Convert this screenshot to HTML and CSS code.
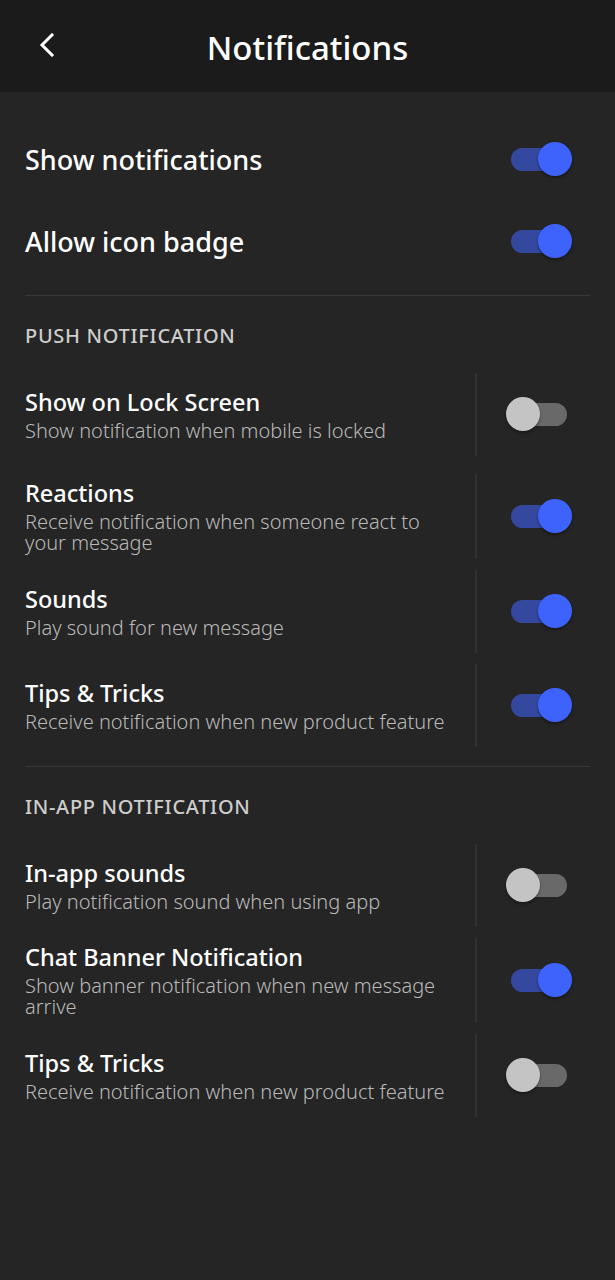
FILE: index.html
```html
<!DOCTYPE html>
<html lang="en">
<head>
<meta charset="utf-8">
<title>Notifications</title>
<link rel="stylesheet" href="styles.css">
</head>
<body>
<div class="screen">
  <header class="topbar">
    <button class="back" aria-label="Back">
      <svg width="24" height="24" viewBox="0 0 24 24"><polyline points="18,4 8,14 18,24" transform="translate(0,-2)" fill="none" stroke="#fff" stroke-width="3" stroke-linecap="square"/></svg>
    </button>
    <h1 class="title">Notifications</h1>
  </header>

  <main class="content">
    <div class="main-row">
      <span class="main-label">Show notifications</span>
      <span class="toggle on"><span class="knob"></span></span>
    </div>
    <div class="main-row">
      <span class="main-label">Allow icon badge</span>
      <span class="toggle on"><span class="knob"></span></span>
    </div>

    <hr class="rule">

    <h2 class="section">PUSH NOTIFICATION</h2>
    <div class="list">
      <div class="item">
        <div class="text"><div class="item-title">Show on Lock Screen</div><div class="item-sub">Show notification when mobile is locked</div></div>
        <div class="ctl"><span class="toggle"><span class="knob"></span></span></div>
      </div>
      <div class="item spaced">
        <div class="text"><div class="item-title">Reactions</div><div class="item-sub">Receive notification when someone react to your message</div></div>
        <div class="ctl"><span class="toggle on"><span class="knob"></span></span></div>
      </div>
      <div class="item">
        <div class="text"><div class="item-title">Sounds</div><div class="item-sub">Play sound for new message</div></div>
        <div class="ctl"><span class="toggle on"><span class="knob"></span></span></div>
      </div>
      <div class="item">
        <div class="text"><div class="item-title">Tips &amp; Tricks</div><div class="item-sub">Receive notification when new product feature</div></div>
        <div class="ctl"><span class="toggle on"><span class="knob"></span></span></div>
      </div>
    </div>

    <hr class="rule rule2">

    <h2 class="section">IN-APP NOTIFICATION</h2>
    <div class="list">
      <div class="item">
        <div class="text"><div class="item-title">In-app sounds</div><div class="item-sub">Play notification sound when using app</div></div>
        <div class="ctl"><span class="toggle"><span class="knob"></span></span></div>
      </div>
      <div class="item">
        <div class="text"><div class="item-title">Chat Banner Notification</div><div class="item-sub">Show banner notification when new message arrive</div></div>
        <div class="ctl"><span class="toggle on"><span class="knob"></span></span></div>
      </div>
      <div class="item">
        <div class="text"><div class="item-title">Tips &amp; Tricks</div><div class="item-sub">Receive notification when new product feature</div></div>
        <div class="ctl"><span class="toggle"><span class="knob"></span></span></div>
      </div>
    </div>
  </main>
</div>
</body>
</html>
```

FILE: styles.css
```css
* { box-sizing: border-box; }
html, body { margin: 0; padding: 0; }
body {
  background: #252525;
  font-family: "Noto Sans", "Open Sans", sans-serif;
  color: #fff;
}
.screen { width: 615px; min-height: 1280px; background: #252525; }

.topbar {
  height: 92px;
  background: #1b1b1b;
  display: flex;
  align-items: center;
  justify-content: center;
  position: relative;
}
.back {
  position: absolute;
  left: 34px;
  top: 33px;
  width: 24px;
  height: 24px;
  padding: 0;
  border: 0;
  background: none;
  display: block;
}
.back svg { display: block; }
.title {
  margin: 2px 0 0;
  font-size: 33px;
  font-weight: 500;
  letter-spacing: 0;
}

.content { padding: 26px 25px 0; }

.main-row {
  height: 82px;
  display: flex;
  align-items: center;
  justify-content: space-between;
  padding-right: 23px;
}
.main-label { font-size: 27px; font-weight: 500; }

.rule {
  border: 0;
  border-top: 1px solid #383838;
  margin: 13px 0 0;
}
.rule2 { margin-top: 19px; }

.section {
  margin: 28px 0 25px;
  font-size: 20px;
  line-height: 24px;
  font-weight: 500;
  color: #cdcdcd;
  letter-spacing: 0.7px;
}

.list { display: flex; flex-direction: column; gap: 11px; }
.item {
  display: flex;
  min-height: 83px;
}
.item.spaced { margin-top: 7px; }
.text {
  flex: 1;
  display: flex;
  flex-direction: column;
  justify-content: center;
  padding: 6px 30px 6px 0;
}
.item-title { font-size: 23.5px; font-weight: 500; line-height: 26px; }
.item-sub { margin-top: 5px; font-size: 20px; font-weight: 300; line-height: 21px; color: #b9b9b9; }
.ctl {
  width: 115px;
  border-left: 2px solid #313131;
  display: flex;
  align-items: center;
  padding-left: 34px;
}

.toggle {
  position: relative;
  display: inline-block;
  width: 56px;
  height: 23px;
  border-radius: 12px;
  background: #696969;
  flex: none;
}
.toggle .knob {
  position: absolute;
  top: -6px;
  left: -5px;
  width: 34px;
  height: 34px;
  border-radius: 50%;
  background: #c4c4c4;
  box-shadow: 0 2px 3px rgba(0,0,0,0.35);
}
.toggle.on { background: #34489f; }
.toggle.on .knob { left: 27px; background: #3e63fc; }
```
